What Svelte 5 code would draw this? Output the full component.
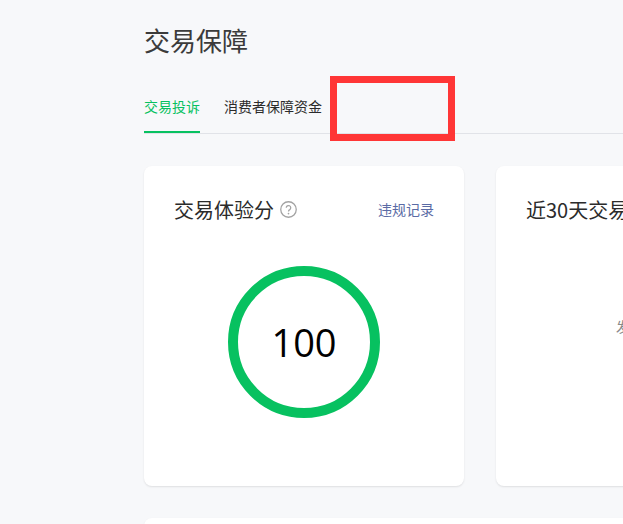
<script>
	const tabs = [
		{ label: '交易投诉', active: true },
		{ label: '消费者保障资金', active: false }
	];
</script>

<div class="page">
	<h1>交易保障</h1>

	<nav class="tabs">
		{#each tabs as tab}
			<span class="tab" class:active={tab.active}>{tab.label}</span>
		{/each}
		<div class="marker"></div>
	</nav>

	<div class="cards">
		<section class="card">
			<header class="card-head">
				<h2>交易体验分</h2>
				<svg class="help" viewBox="0 0 16 16" width="17" height="17" aria-hidden="true">
					<circle cx="8" cy="8" r="7.3" fill="none" stroke="#a3a3a3" stroke-width="1.2" />
					<path d="M5.9 6.4a2.1 2.1 0 1 1 3.3 1.7c-.8.5-1.2.9-1.2 1.7" fill="none" stroke="#a3a3a3" stroke-width="1.2" />
					<circle cx="8" cy="11.8" r=".8" fill="#a3a3a3" />
				</svg>
				<a class="link" href="#records">违规记录</a>
			</header>
			<div class="ring"><span>100</span></div>
		</section>

		<section class="card">
			<header class="card-head">
				<h2>近30天交易</h2>
			</header>
			<p class="empty">发</p>
		</section>
	</div>

	<section class="card next"></section>
</div>

<style>
	:global(body) {
		background: #f7f8fa;
		overflow: hidden;
	}
	.page {
		width: 900px;
		height: 524px;
		overflow: hidden;
		padding: 23px 0 0 144px;
		box-sizing: border-box;
		font-family: "Noto Sans CJK SC", "Noto Sans", sans-serif;
		color: #333;
	}
	h1 {
		margin: 0;
		font-size: 26px;
		font-weight: 400;
		line-height: 34px;
		color: #3b3b3b;
	}
	.tabs {
		position: relative;
		display: flex;
		gap: 24px;
		margin-top: 26px;
		height: 50px;
		border-bottom: 1px solid #e1e3e8;
		box-sizing: content-box;
	}
	.tab {
		height: 50px;
		line-height: 47px;
		box-sizing: border-box;
		font-size: 14px;
		color: #2b2b2b;
	}
	.tab.active {
		color: #07c160;
		border-bottom: 2px solid #07c160;
	}
	/* red annotation box over the tab bar */
	.marker {
		position: absolute;
		left: 186px;
		top: -7px;
		width: 125px;
		height: 65px;
		box-sizing: border-box;
		border: 7px solid #ff3636;
	}
	.cards {
		display: flex;
		gap: 32px;
		margin-top: 32px;
	}
	.card {
		width: 320px;
		height: 320px;
		flex: none;
		box-sizing: border-box;
		background: #fff;
		border-radius: 8px;
		box-shadow: 0 1px 2px rgba(0, 0, 0, 0.1);
		padding: 29px 30px 30px;
	}
	.card-head {
		display: flex;
		align-items: center;
		height: 28px;
	}
	h2 {
		margin: 0;
		font-size: 20px;
		font-weight: 400;
		color: #2b2b2b;
	}
	.help {
		margin-left: 6px;
	}
	.link {
		margin-left: auto;
		font-size: 14px;
		color: #5a6ba5;
		text-decoration: none;
	}
	.ring {
		display: flex;
		align-items: center;
		justify-content: center;
		width: 152px;
		height: 152px;
		box-sizing: border-box;
		margin: 43px auto 0;
		border: 10px solid #07c160;
		border-radius: 50%;
		font-family: "Open Sans", "Noto Sans", sans-serif;
		font-size: 38px;
		color: #000;
	}
	.empty {
		margin: 93px 0 0 90px;
		font-size: 14px;
		line-height: 20px;
		color: #8a8a8a;
	}
	.next {
		margin-top: 32px;
		width: 900px;
	}
</style>
